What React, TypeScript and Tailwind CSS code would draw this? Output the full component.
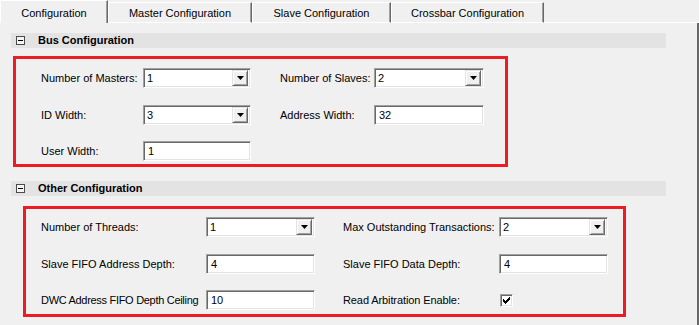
import React from "react";

const sunken =
  "bg-white border border-t-[#a0a0a0] border-l-[#a0a0a0] border-b-white border-r-white shadow-[inset_1px_1px_0_#696969,inset_-1px_-1px_0_#e3e3e3]";

function Select({ value, w }: { value: string; w: string }) {
  return (
    <div className={`${sunken} ${w} h-[20px] flex items-center justify-between pl-[3px] pr-[2px]`}>
      <span className="leading-none">{value}</span>
      <div className="w-[16px] h-[16px] bg-[#f0f0f0] border border-t-[#e3e3e3] border-l-[#e3e3e3] border-b-[#696969] border-r-[#696969] shadow-[inset_1px_1px_0_#ffffff,inset_-1px_-1px_0_#a0a0a0] flex items-center justify-center">
        <svg width="7" height="4" viewBox="0 0 7 4">
          <polygon points="0,0 7,0 3.5,4" fill="#000" />
        </svg>
      </div>
    </div>
  );
}

function Input({ value, w }: { value: string; w: string }) {
  return (
    <div className={`${sunken} ${w} h-[20px] flex items-center pl-[4px] pt-[1px]`}>
      <span className="leading-none">{value}</span>
    </div>
  );
}

function Checkbox() {
  return (
    <div className="ml-[1px] w-[13px] h-[13px] bg-white border border-t-[#a0a0a0] border-l-[#a0a0a0] border-b-white border-r-white shadow-[inset_1px_1px_0_#696969,inset_-1px_-1px_0_#e3e3e3] flex items-center justify-center">
      <svg width="7" height="7" viewBox="0 0 7 7" shapeRendering="crispEdges">
        <path d="M0 2 h1 v1 h1 v1 h1 v-1 h1 v-1 h1 v-1 h1 v-1 h1 v3 h-1 v1 h-1 v1 h-1 v1 h-1 v1 h-1 v-1 h-1 v-1 h-1 v-1 h-1 z" fill="#000" />
      </svg>
    </div>
  );
}

function SectionHeader({ title }: { title: string }) {
  return (
    <div className="w-[655px] h-[15px] bg-[#e3e3e3] flex items-center pl-[5px]">
      <div className="w-[9px] h-[9px] border border-[#4a4a4a] flex items-center justify-center bg-[#f4f4f4]">
        <div className="w-[5px] h-[1px] bg-black" />
      </div>
      <span className="ml-[13px] font-bold text-[11px] leading-none">{title}</span>
    </div>
  );
}

function Tab({ label, w, active }: { label: string; w: string; active?: boolean }) {
  return (
    <div
      className={`${w} flex items-center justify-center border-l border-t border-white border-r border-r-[#696969] shadow-[inset_-1px_0_0_#a0a0a0] ${
        active ? "h-[23px] pt-[2px]" : "h-[21px] pt-[1px] border-b border-b-white"
      }`}
    >
      <span className="leading-none">{label}</span>
    </div>
  );
}

export default function App() {
  return (
    <div className="w-[699px] h-[325px] bg-[#f0f0f0] overflow-hidden font-['Liberation_Sans',Arial,sans-serif] text-[11px] text-black">
      <div className="flex items-end h-[23px]">
        <Tab label="Configuration" w="w-[108px]" active />
        <Tab label="Master Configuration" w="w-[144px]" />
        <Tab label="Slave Configuration" w="w-[139px]" />
        <Tab label="Crossbar Configuration" w="w-[153px]" />
        <div className="flex-1 h-[1px] bg-white" />
      </div>
      <div className="h-[302px] border-r-2 border-r-[#696969] pl-[11px] pt-[10px] flex flex-col">
        <SectionHeader title="Bus Configuration" />
        <div className="mt-[8px] ml-[2px] w-[495px] h-[111px] border-[3px] border-[#ed1c24] pl-[25px] pt-[9px] flex flex-col">
          <div className="grid grid-cols-[102px_108px_29px_94px_110px] items-center h-[20px]">
            <span>Number of Masters:</span>
            <Select value="1" w="w-[108px]" />
            <span />
            <span>Number of Slaves:</span>
            <Select value="2" w="w-[110px]" />
          </div>
          <div className="mt-[17px] grid grid-cols-[102px_108px_29px_94px_110px] items-center h-[20px]">
            <span>ID Width:</span>
            <Select value="3" w="w-[108px]" />
            <span />
            <span>Address Width:</span>
            <Input value="32" w="w-[110px]" />
          </div>
          <div className="mt-[16px] grid grid-cols-[102px_108px] items-center h-[20px]">
            <span>User Width:</span>
            <Input value="1" w="w-[108px]" />
          </div>
        </div>
        <div className="mt-[14px]">
          <SectionHeader title="Other Configuration" />
        </div>
        <div className="mt-[10px] ml-[12px] w-[603px] h-[111px] border-[3px] border-[#ed1c24] pl-[15px] pt-[8px] flex flex-col">
          <div className="grid grid-cols-[165px_109px_28px_156px_109px] items-center h-[20px]">
            <span>Number of Threads:</span>
            <Select value="1" w="w-[109px]" />
            <span />
            <span>Max Outstanding Transactions:</span>
            <Select value="2" w="w-[109px]" />
          </div>
          <div className="mt-[17px] grid grid-cols-[165px_109px_28px_156px_109px] items-center h-[20px]">
            <span>Slave FIFO Address Depth:</span>
            <Input value="4" w="w-[109px]" />
            <span />
            <span>Slave FIFO Data Depth:</span>
            <Input value="4" w="w-[109px]" />
          </div>
          <div className="mt-[16px] grid grid-cols-[165px_109px_28px_156px_109px] items-center h-[20px]">
            <span className="whitespace-nowrap tracking-[-0.3px]">DWC Address FIFO Depth Ceiling</span>
            <Input value="10" w="w-[109px]" />
            <span />
            <span className="tracking-[-0.1px]">Read Arbitration Enable:</span>
            <Checkbox />
          </div>
        </div>
      </div>
    </div>
  );
}
